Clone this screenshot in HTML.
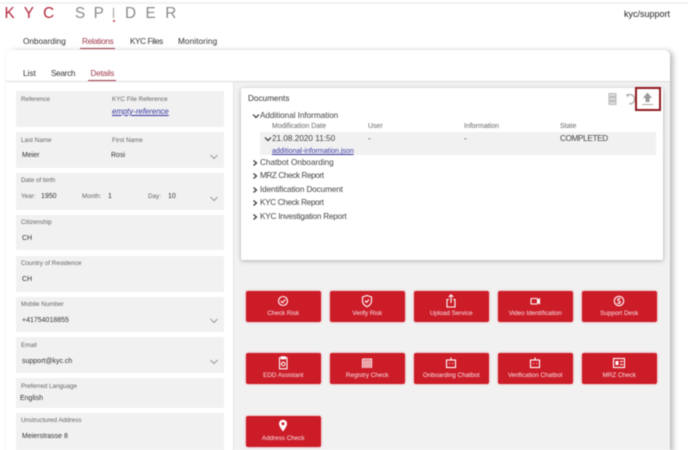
<!DOCTYPE html>
<html><head><meta charset="utf-8">
<style>
html,body{margin:0;padding:0;background:#fff}
#p{position:relative;width:688px;height:450px;overflow:hidden;background:#fff;font-family:"Liberation Sans",sans-serif;color:#333;filter:blur(.5px)}
#p div{position:absolute;white-space:nowrap}
.l{font-size:6.3px;color:#666;line-height:8px;margin-top:1px}
.v{font-size:7px;color:#333;line-height:10px;margin-top:1px}
.f{position:absolute;left:16px;width:208px;background:#f1f1f1}
.tab{font-size:8.2px;color:#333;line-height:10px}
.tr{font-size:8.2px;color:#444;line-height:10px;left:260px;margin-top:1px}
.b{position:absolute;width:74.5px;height:30.5px;background:#cc1c28;border-radius:2px;box-shadow:0 0 2px rgba(230,60,70,.55);color:#f8e4e5;font-size:6.3px;text-align:center}
.b span{position:absolute;left:0;right:0;top:19px;line-height:8px}
.b svg{position:absolute;left:28.25px;top:3px;width:18px;height:14px;fill:none;stroke:#fff;stroke-width:1.1}
.ch{position:absolute;width:10px;height:6px}
</style></head><body><div id="p">
<div style="left:0;top:2px;width:688px;height:2px;background:#f1f1f1"></div>
<div style="left:4.500px;top:5px;font-size:15.300px;line-height:18px;letter-spacing:9.100px;color:#b4283c">KYC</div>
<div style="left:75px;top:5px;font-size:15.300px;line-height:18px;letter-spacing:8.400px;color:#8a8a8a">SP</div>
<div style="left:112.500px;top:8px;width:1px;height:10px;background:#999"></div>
<div style="left:112.500px;top:20px;width:2px;height:2px;border-radius:1px;background:#b4283c"></div>
<div style="left:125px;top:5px;font-size:15.300px;line-height:18px;letter-spacing:9.500px;color:#8a8a8a">DER</div>
<div style="left:624px;top:9px;font-size:9px;line-height:10px;color:#222">kyc/support</div>

<div class="tab" style="left:23px;top:37px">Onboarding</div>
<div class="tab" style="left:82px;top:37px;color:#a03b4c;letter-spacing:-.3px">Relations</div>
<div class="tab" style="left:130px;top:37px;letter-spacing:-.4px">KYC Files</div>
<div class="tab" style="left:178px;top:37px;letter-spacing:.1px">Monitoring</div>
<div style="left:80px;top:48px;width:35px;height:1px;background:#a8384c"></div>

<div style="left:6px;top:50px;width:664px;height:420px;background:#fff;border-radius:6px;box-shadow:3px 1px 6px rgba(0,0,0,.28)"></div>
<div class="tab" style="left:23px;top:69px">List</div>
<div class="tab" style="left:51px;top:69px;letter-spacing:-.3px">Search</div>
<div class="tab" style="left:90.500px;top:69px;color:#a03b4c;letter-spacing:-.2px">Details</div>
<div style="left:6px;top:81px;width:664px;height:1px;background:#ddd"></div>
<div style="left:88px;top:80px;width:28px;height:1px;background:#a8384c"></div>
<div style="left:234px;top:82px;width:436px;height:368px;background:#f1f1f1"></div>
<div style="left:233px;top:82px;width:1px;height:368px;background:#e4e4e4"></div>

<div class="f" style="top:91px;height:36px"></div>
<div class="l" style="left:21px;top:95px">Reference</div>
<div class="l" style="left:112px;top:95px">KYC File Reference</div>
<div style="left:112px;top:107px;font-size:7.800px;line-height:10px;font-style:italic;color:#3a35a0;text-decoration:underline">empty-reference</div>

<div class="f" style="top:132px;height:36px"></div>
<div class="l" style="left:21px;top:136px">Last Name</div>
<div class="l" style="left:112px;top:136px">First Name</div>
<div class="v" style="left:22px;top:150px">Meier</div>
<div class="v" style="left:111px;top:150px">Rosi</div>

<div class="f" style="top:173px;height:37px"></div>
<div class="l" style="left:21px;top:176px">Date of birth</div>
<div class="l" style="left:21px;top:192px">Year:</div><div class="v" style="left:41px;top:191px">1950</div>
<div class="l" style="left:82px;top:192px">Month:</div><div class="v" style="left:108px;top:191px">1</div>
<div class="l" style="left:148px;top:192px">Day:</div><div class="v" style="left:168px;top:191px">10</div>

<div class="f" style="top:215px;height:35px"></div>
<div class="l" style="left:21px;top:218px">Citizenship</div>
<div class="v" style="left:22px;top:233px">CH</div>

<div class="f" style="top:256px;height:36px"></div>
<div class="l" style="left:21px;top:259px">Country of Residence</div>
<div class="v" style="left:22px;top:274px">CH</div>

<div class="f" style="top:297px;height:35px"></div>
<div class="l" style="left:21px;top:300px">Mobile Number</div>
<div class="v" style="left:22px;top:315px">+41754018855</div>

<div class="f" style="top:337px;height:36px"></div>
<div class="l" style="left:21px;top:341px">Email</div>
<div class="v" style="left:22px;top:356px">support@kyc.ch</div>

<div class="f" style="top:378px;height:30px"></div>
<div class="l" style="left:21px;top:382px">Preferred Language</div>
<div class="v" style="left:20px;top:393px">English</div>

<div class="f" style="top:413px;height:37px"></div>
<div class="l" style="left:21px;top:416px">Unstructured Address</div>
<div class="v" style="left:22px;top:431px">Meierstrasse 8</div>

<svg class="ch" style="left:209px;top:154px" viewBox="0 0 10 6"><path d="M1.500 1L5 4.500L8.500 1" fill="none" stroke="#999"/></svg>
<svg class="ch" style="left:209px;top:196px" viewBox="0 0 10 6"><path d="M1.500 1L5 4.500L8.500 1" fill="none" stroke="#999"/></svg>
<svg class="ch" style="left:209px;top:318px" viewBox="0 0 10 6"><path d="M1.500 1L5 4.500L8.500 1" fill="none" stroke="#999"/></svg>
<svg class="ch" style="left:209px;top:359px" viewBox="0 0 10 6"><path d="M1.500 1L5 4.500L8.500 1" fill="none" stroke="#999"/></svg>

<div style="left:241px;top:88px;width:422px;height:172px;background:#fff;border-radius:2px;box-shadow:0 1px 4px rgba(0,0,0,.28)"></div>
<div style="left:248px;top:94px;font-size:8.200px;line-height:10px;color:#333">Documents</div>
<svg style="position:absolute;left:608px;top:92px;width:10px;height:14px" viewBox="0 0 10 14"><path d="M1 1.500h7v3h-7zM1 5.500h7v3h-7zM1 9.500h7v3h-7z" fill="#ddd" stroke="#aaa" stroke-width=".8"/></svg>
<svg style="position:absolute;left:624px;top:92px;width:13px;height:14px" viewBox="0 0 13 14"><path d="M3 3.500A4.700 4.700 0 1 1 5 11.800" fill="none" stroke="#aaa" stroke-width="1.200"/><path d="M2 2L5.500 2.500L3.500 5.500z" fill="#aaa"/></svg>
<div style="left:635px;top:87px;width:22px;height:20px;border:2px solid #8f1b20"></div>
<svg style="position:absolute;left:640px;top:91px;width:15px;height:15px" viewBox="0 0 15 15"><path d="M7.500 1.500L12 7H9.500V11H5.500V7H3z" fill="#9a9a9a"/><path d="M2 13.500h11" stroke="#aaa" stroke-width="1"/></svg>

<svg class="ch" style="left:251px;top:113px" viewBox="0 0 10 6"><path d="M2 1.500L5 4.500L8 1.500" fill="none" stroke="#333" stroke-width="1.200"/></svg>
<div class="tr" style="top:110px;letter-spacing:-.05px">Additional Information</div>
<div class="l" style="left:272px;top:122px;font-size:7px">Modification Date</div>
<div class="l" style="left:368px;top:122px;font-size:7px">User</div>
<div class="l" style="left:464px;top:122px;font-size:7px">Information</div>
<div class="l" style="left:560px;top:122px;font-size:7px">State</div>
<div style="left:260px;top:132px;width:396px;height:23px;background:#f1f1f1"></div>
<svg class="ch" style="left:263px;top:136px" viewBox="0 0 10 6"><path d="M2 1.500L5 4.500L8 1.500" fill="none" stroke="#333" stroke-width="1.200"/></svg>
<div class="tr" style="left:272px;top:133px">21.08.2020 11:50</div>
<div class="tr" style="left:368px;top:133px">-</div>
<div class="tr" style="left:464px;top:133px">-</div>
<div class="tr" style="left:560px;top:133px;letter-spacing:-.35px">COMPLETED</div>
<div style="left:272px;top:147px;font-size:7px;line-height:9px;color:#3a35a0;text-decoration:underline">additional-information.json</div>

<svg class="ch" style="left:250px;top:160px" viewBox="0 0 10 6"><path d="M3.500 .5L6.500 3L3.500 5.500" fill="none" stroke="#333" stroke-width="1.200"/></svg>
<div class="tr" style="top:157px">Chatbot Onboarding</div>
<svg class="ch" style="left:250px;top:173px" viewBox="0 0 10 6"><path d="M3.500 .5L6.500 3L3.500 5.500" fill="none" stroke="#333" stroke-width="1.200"/></svg>
<div class="tr" style="top:170px;letter-spacing:-.4px">MRZ Check Report</div>
<svg class="ch" style="left:250px;top:187px" viewBox="0 0 10 6"><path d="M3.500 .5L6.500 3L3.500 5.500" fill="none" stroke="#333" stroke-width="1.200"/></svg>
<div class="tr" style="top:184px;letter-spacing:-.12px">Identification Document</div>
<svg class="ch" style="left:250px;top:200px" viewBox="0 0 10 6"><path d="M3.500 .5L6.500 3L3.500 5.500" fill="none" stroke="#333" stroke-width="1.200"/></svg>
<div class="tr" style="top:197px;letter-spacing:-.35px">KYC Check Report</div>
<svg class="ch" style="left:250px;top:214px" viewBox="0 0 10 6"><path d="M3.500 .5L6.500 3L3.500 5.500" fill="none" stroke="#333" stroke-width="1.200"/></svg>
<div class="tr" style="top:211px;letter-spacing:-.23px">KYC Investigation Report</div>

<div class="b" style="left:246px;top:291px"><svg viewBox="0 0 18 14"><circle cx="9" cy="7" r="4.500"/><path d="M6.800 7L8.500 8.700L11.300 5.500"/></svg><span>Check Risk</span></div>
<div class="b" style="left:330px;top:291px"><svg viewBox="0 0 18 14"><path d="M9 1.500L13.500 3V7C13.500 10 11 11.800 9 12.800C7 11.800 4.500 10 4.500 7V3z"/><path d="M7 6.800L8.500 8.300L11 5.500"/></svg><span>Verify Risk</span></div>
<div class="b" style="left:414px;top:291px"><svg viewBox="0 0 18 14"><path d="M7 5.500H5V13H13V5.500H11M9 9V1M6.800 3L9 .8L11.200 3"/></svg><span>Upload Service</span></div>
<div class="b" style="left:498px;top:291px"><svg viewBox="0 0 18 14"><rect x="5" y="4.500" width="6.500" height="5.500" rx=".8"/><path d="M11.500 6.500L13.500 5V9.500L11.500 8z" fill="#fff"/></svg><span>Video Identification</span></div>
<div class="b" style="left:582px;top:291px"><svg viewBox="0 0 18 14"><circle cx="9" cy="7" r="4.700"/><path d="M10.500 5C9.500 4.200 7.500 4.500 7.800 6C8 7.300 10.500 6.800 10.300 8.300C10 9.700 8 9.500 7.300 8.800"/></svg><span>Support Desk</span></div>

<div class="b" style="left:246px;top:353px"><svg viewBox="0 0 18 14"><rect x="5.500" y="1.800" width="7.500" height="11"/><rect x="7.300" y=".8" width="4" height="2" fill="#fff"/><circle cx="9.200" cy="8" r="1.800"/></svg><span>EDD Assistant</span></div>
<div class="b" style="left:330px;top:353px"><svg viewBox="0 0 18 14"><path d="M4.500 3H13.500V12M4.500 3V12M6.300 4V12M8.100 4V12M9.900 4V12M11.700 4V12" stroke-width="1.100"/></svg><span>Registry Check</span></div>
<div class="b" style="left:414px;top:353px"><svg viewBox="0 0 18 14"><rect x="4.500" y="4" width="9" height="7.500"/><path d="M9 4V1.500M7 7.500h.8M10.200 7.500h.8"/></svg><span>Onboarding Chatbot</span></div>
<div class="b" style="left:498px;top:353px"><svg viewBox="0 0 18 14"><rect x="4.500" y="4" width="9" height="7.500"/><path d="M9 4V1.500M7 7.500h.8M10.200 7.500h.8"/></svg><span>Verification Chatbot</span></div>
<div class="b" style="left:582px;top:353px"><svg viewBox="0 0 18 14"><rect x="3.500" y="2.500" width="11" height="9"/><rect x="5.500" y="5" width="3" height="4" fill="#fff" stroke="none"/><path d="M10 5.500h3M10 8.500h3"/></svg><span>MRZ Check</span></div>

<div class="b" style="left:246px;top:416px"><svg viewBox="0 0 18 14"><path d="M9 .8C6.500 .8 5 2.700 5 4.800C5 7.500 9 12.500 9 12.500C9 12.500 13 7.500 13 4.800C13 2.700 11.500 .8 9 .8z" fill="#fff" stroke="none"/><circle cx="9" cy="4.800" r="1.500" fill="#cc1c28" stroke="none"/></svg><span>Address Check</span></div>
</div></body></html>
